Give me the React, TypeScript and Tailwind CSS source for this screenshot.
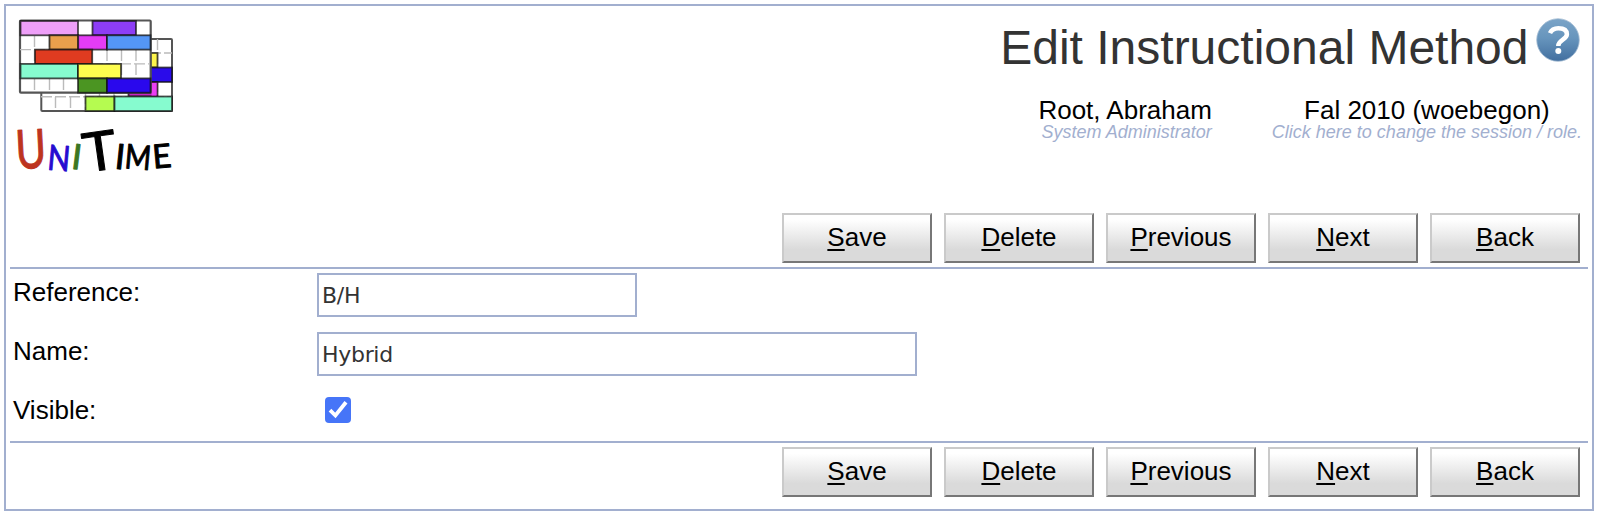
import React from "react";

type Block = [x: number, y: number, w: number, h: number, fill: string];

const backBlocks: Block[] = [
  [150.5, 53, 7, 14.5, "#fdf54c"],
  [150.5, 67.5, 21.5, 14.5, "#2a0bea"],
  [128.5, 82, 29, 14.5, "#c726c6"],
  [85.5, 96.5, 29, 14.5, "#b5fb50"],
  [114.5, 96.5, 57.5, 14.5, "#86fbcf"],
];

const frontBlocks: Block[] = [
  [20.5, 21, 57.5, 14.3, "#ee9ff8"],
  [92.5, 21, 43.5, 14.3, "#8d3df6"],
  [49.5, 35.3, 28.7, 14.3, "#e9a04c"],
  [78.2, 35.3, 28.8, 14.3, "#e43cf5"],
  [107, 35.3, 43.5, 14.3, "#5496f6"],
  [35, 49.6, 57.2, 14.3, "#df3b20"],
  [20.5, 63.9, 57.5, 14.5, "#86fbcf"],
  [78, 63.9, 43, 14.5, "#fefd4f"],
  [78, 78.4, 29, 14.3, "#4b9522"],
  [107, 78.4, 43.5, 14.3, "#2a08ed"],
];

function Blocks({ items }: { items: Block[] }) {
  return (
    <g stroke="#111" strokeWidth="1.8" strokeOpacity=".75">
      {items.map(([x, y, width, height, fill]) => (
        <rect key={`${x}-${y}`} x={x} y={y} width={width} height={height} fill={fill} />
      ))}
    </g>
  );
}

function Logo() {
  return (
    <svg width="172" height="180" viewBox="12 16 172 180" role="img" aria-label="UniTime">
      <rect x="41.3" y="39" width="130.7" height="72" rx="1" fill="#fff" stroke="#555" strokeWidth="2" />
      <path
        d="M157.5 39v58M55.5 97v14M70.5 97v14M85.5 93v18M99.5 93v4M114 93v4M150 53H172M41 96.7H172"
        fill="none"
        stroke="#bbb"
        strokeWidth="1.4"
        strokeDasharray="11 3"
      />
      <Blocks items={backBlocks} />
      <path d="M151.5 83h5v12.5h-5z" fill="#ea3ff3" />
      <rect x="20" y="20.5" width="130.7" height="72.2" rx="1" fill="#fff" stroke="#555" strokeWidth="2.2" />
      <path
        d="M34.5 36v28M49.5 36v14M34.5 79v14M49.5 79v14M63.5 79v14M107 50v14M121.5 50v28M136 50v28M20 49.6H50M92 63.9H150"
        fill="none"
        stroke="#bbb"
        strokeWidth="1.4"
        strokeDasharray="11 3"
      />
      <Blocks items={frontBlocks} />
      <g fontFamily="Lato, 'Liberation Sans', sans-serif" strokeLinejoin="round" strokeWidth="1">
        <text transform="translate(16.5 169) rotate(-3) scale(.77 1)" fontSize="54" fill="#bd3420" stroke="#bd3420">U</text>
        <text transform="translate(46.8 169.5) rotate(5) scale(.84 1)" fontSize="35" fill="#260bd0" stroke="#260bd0">N</text>
        <text transform="translate(70.5 168.5) rotate(7)" fontSize="35" fill="#3c7622" stroke="#3c7622">I</text>
        <text transform="translate(85.5 172.5) rotate(-8) scale(1.06 1)" fontSize="54" fill="#000" stroke="#000">T</text>
        <g fill="#000" stroke="#000">
          <text transform="translate(114 168.5) rotate(6)" fontSize="35">I</text>
          <text transform="translate(124 168) rotate(5) scale(.83 1)" fontSize="34">M</text>
          <text transform="translate(153.5 168.5) rotate(-5) scale(.98 1)" fontSize="33">E</text>
        </g>
      </g>
    </svg>
  );
}

function HelpIcon() {
  return (
    <svg className="shrink-0" width="44" height="44" viewBox="0 0 44 44" role="img" aria-label="Help">
      <defs>
        <linearGradient id="help" x1="0" y1="0" x2="0" y2="1">
          <stop offset="0" stopColor="#7ba4c7" />
          <stop offset=".45" stopColor="#6795bd" />
          <stop offset="1" stopColor="#426f9f" />
        </linearGradient>
      </defs>
      <circle cx="22" cy="22" r="21.3" fill="url(#help)" stroke="#a9c0d5" strokeWidth=".8" />
      <path
        d="M14 15.2C15.6 11.5 18.4 10.2 22.3 10.2c5.4 0 8.6 2.2 8.6 6.1 0 5.4-8.6 5.4-8.6 11.6"
        fill="none"
        stroke="#fff"
        strokeWidth="4.5"
      />
      <circle cx="22.3" cy="33" r="3" fill="#fff" />
    </svg>
  );
}

const actions = ["Save", "Delete", "Previous", "Next", "Back"];

function Actions() {
  return (
    <div className="flex justify-end gap-3 pr-2">
      {actions.map((label) => (
        <button
          key={label}
          className="h-[50px] w-[150px] border-2 border-t-[#cacaca] border-r-[#777] border-b-[#777] border-l-[#cacaca] bg-linear-to-b from-white from-10% to-[#dadada] to-75% pb-[3px] text-[26px] leading-[30px] text-black"
        >
          <span className="underline decoration-2 underline-offset-[3px] [text-decoration-skip-ink:none]">{label[0]}</span>
          {label.slice(1)}
        </button>
      ))}
    </div>
  );
}

const inputClass =
  "h-11 border-2 border-[#a2afcf] bg-white px-[3px] pt-px font-['DejaVu_Sans',sans-serif] text-[22px] tracking-[-0.3px] text-[#333] outline-none";

export default function App() {
  return (
    <div className="h-[518px] bg-white p-1 font-['Liberation_Sans',Arial,sans-serif] text-black">
      <main className="h-[507px] w-[1590px] border-2 border-[#a2afcf] px-1">
        <header className="flex h-[207px] justify-between pt-2.5 pl-0.5">
          <Logo />
          <div className="flex flex-col items-end pr-1.5">
            <div className="flex items-start gap-[7px] pt-[1.5px] pr-[2.5px]">
              <h1 className="pt-[2.5px] text-[48px] leading-[56px] text-[#333]">Edit Instructional Method</h1>
              <HelpIcon />
            </div>
            <div className="mt-[19.5px] flex gap-[60px]">
              <div className="text-right">
                <div className="-mb-px pt-px text-[26px] leading-[26px]">Root, Abraham</div>
                <div className="text-[18px] leading-[20px] text-[#a2afcf] italic">System Administrator</div>
              </div>
              <div className="text-center">
                <div className="-mb-px pt-px text-[26px] leading-[26px]">Fal 2010 (woebegon)</div>
                <div className="text-[18px] leading-[20px] text-[#a2afcf] italic">Click here to change the session / role.</div>
              </div>
            </div>
          </div>
        </header>
        <Actions />
        <section className="mt-1 h-44 border-y-2 border-[#a2afcf] pt-1 pl-[3px] text-[26px] leading-[30px]">
          <div className="flex h-[59px]">
            <label htmlFor="reference" className="w-[304px] pt-1">Reference:</label>
            <input id="reference" defaultValue="B/H" className={`${inputClass} w-80`} />
          </div>
          <div className="flex h-[59px]">
            <label htmlFor="name" className="w-[304px] pt-1">Name:</label>
            <input id="name" defaultValue="Hybrid" className={`${inputClass} w-[600px]`} />
          </div>
          <div className="flex">
            <label className="w-[304px] pt-1">Visible:</label>
            <button
              role="checkbox"
              aria-checked="true"
              aria-label="Visible"
              className="mt-1.5 ml-2 flex size-[26px] items-center justify-center rounded-[4px] bg-[#4675f8]"
            >
              <svg width="26" height="26" viewBox="0 0 26 26">
                <path d="M5 13.2 10.4 18.5 21 5.2" fill="none" stroke="#fff" strokeWidth="3.8" />
              </svg>
            </button>
          </div>
        </section>
        <div className="mt-1">
          <Actions />
        </div>
      </main>
    </div>
  );
}
